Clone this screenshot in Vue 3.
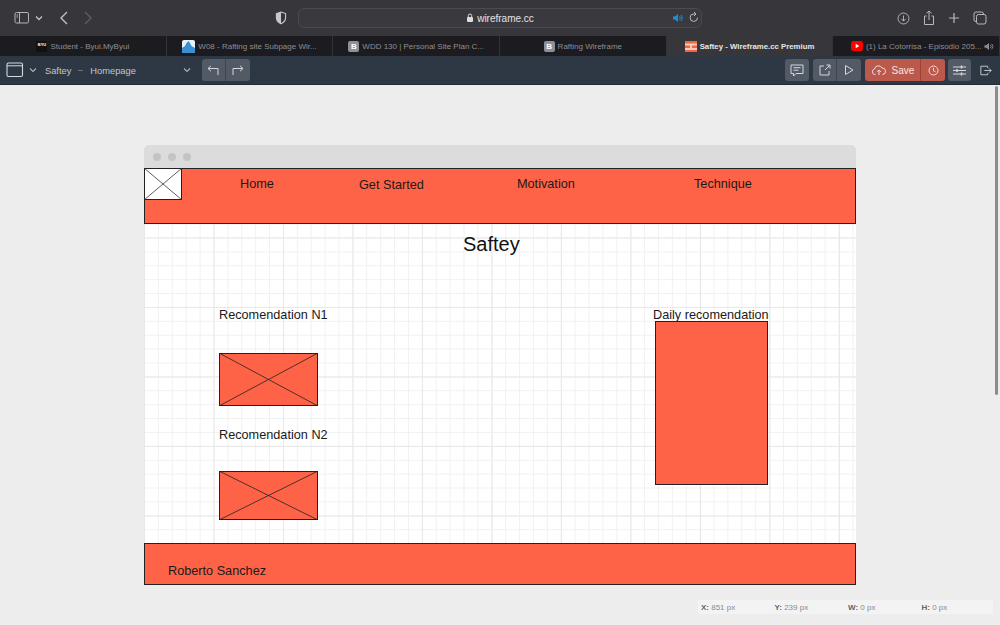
<template>
  <div class="page">
    <header class="toolbar">
      <div class="tb-left">
        <svg class="side-ic" width="16" height="14" viewBox="0 0 16 14"><rect x="1" y="1.500" width="13.500" height="10.500" rx="1.500" fill="none" stroke="#b4b4b6"/><line x1="5.500" y1="1.500" x2="5.500" y2="12" stroke="#b4b4b6"/><path d="M2.500 4h1.500M2.500 6h1.500" stroke="#b4b4b6"/></svg>
        <svg width="8" height="6" viewBox="0 0 8 6"><path d="M1 1.500l3 3 3-3" fill="none" stroke="#c4c4c6" stroke-width="1.300"/></svg>
        <svg class="back" width="10" height="16" viewBox="0 0 10 16"><path d="M8 2L2 8l6 6" fill="none" stroke="#c2c2c4" stroke-width="1.400"/></svg>
        <svg class="forward" width="10" height="16" viewBox="0 0 10 16"><path d="M2 2l6 6-6 6" fill="none" stroke="#5e5e62" stroke-width="1.400"/></svg>
      </div>
      <svg class="shield" width="12" height="14" viewBox="0 0 12 14"><path d="M6 1l4.600 1.600v4c0 3-2 5-4.600 6.200C3.400 11.600 1.400 9.600 1.400 6.600v-4z" fill="none" stroke="#c9c9cb" stroke-width="1.100"/><path d="M6 1v11.800C3.400 11.600 1.400 9.600 1.400 6.600v-4z" fill="#c9c9cb"/></svg>
      <div class="url">
        <span class="url-text">
          <svg width="8" height="10" viewBox="0 0 8 10"><rect x="1" y="4" width="6" height="5" rx="1" fill="#dcdcde"/><path d="M2.300 4V2.700a1.700 1.700 0 0 1 3.400 0V4" fill="none" stroke="#dcdcde"/></svg>
          wireframe.cc
        </span>
        <svg class="speaker" width="10" height="10" viewBox="0 0 10 10"><path d="M0 3.500h2L5 1v8L2 6.500H0z" fill="#1e8fe0"/><path d="M6.500 3.200a2.500 2.500 0 0 1 0 3.600M8 2a4.200 4.200 0 0 1 0 6" fill="none" stroke="#1e8fe0"/></svg>
        <svg class="reload" width="10" height="11" viewBox="0 0 10 11"><path d="M8.500 5.700A3.700 3.700 0 1 1 5 2h1.500" fill="none" stroke="#b9b9bb"/><path d="M5 0l2 2-2 2" fill="none" stroke="#b9b9bb"/></svg>
      </div>
      <div class="tb-right">
        <svg width="13" height="13" viewBox="0 0 14 14"><circle cx="7" cy="7" r="5.900" fill="none" stroke="#b9b9bb"/><path d="M7 3.800v6M4.700 7.500L7 9.800l2.300-2.300" fill="none" stroke="#b9b9bb"/></svg>
        <svg width="12" height="16" viewBox="0 0 12 16"><path d="M3.500 6H1.500v8.500h9V6H8.500" fill="none" stroke="#b9b9bb"/><path d="M6 10V1M3.500 3.300L6 1l2.500 2.300" fill="none" stroke="#b9b9bb"/></svg>
        <svg width="12" height="12" viewBox="0 0 12 12"><path d="M6 1v10M1 6h10" stroke="#b9b9bb" stroke-width="1.200"/></svg>
        <svg width="14" height="14" viewBox="0 0 14 14"><rect x="1" y="1" width="9.500" height="9.500" rx="2" fill="none" stroke="#b9b9bb"/><rect x="3.500" y="3.500" width="9.500" height="9.500" rx="2" fill="#37363b" stroke="#b9b9bb"/></svg>
      </div>
    </header>

    <nav class="tabs">
      <div v-for="tab in tabs" :key="tab.label" class="tab" :class="{ active: tab.active }">
        <span v-if="tab.kind === 'b'" class="fav b">B</span>
        <span v-else-if="tab.kind === 'byu'" class="fav byu">BYU</span>
        <svg v-else-if="tab.kind === 'mtn'" width="13" height="13" viewBox="0 0 13 13"><rect width="13" height="13" rx="2" fill="#e8f1f8"/><path d="M0 13V8l3-2 1.500-3L6.500 1 8 3l1.500 3L13 8v5z" fill="#3c8fd2"/></svg>
        <svg v-else-if="tab.kind === 'wf'" width="12" height="11" viewBox="0 0 12 11"><rect width="12" height="11" fill="#f6c9bb"/><path d="M0 0h12v2.500H0zM0 4.500h5V7H0zM7 4.500h5V7H7zM0 9h12v2H0z" fill="#f0663f"/></svg>
        <svg v-else width="12" height="10" viewBox="0 0 12 10"><rect width="12" height="10" rx="2.500" fill="#f00"/><path d="M4.700 2.800v4.400L8.300 5z" fill="#fff"/></svg>
        <span class="tab-label">{{ tab.label }}</span>
        <svg v-if="tab.sound" class="tab-sound" width="10" height="9" viewBox="0 0 10 10"><path d="M0 3.500h2L5 1v8L2 6.500H0z" fill="#8e8e90"/><path d="M6.500 3.200a2.500 2.500 0 0 1 0 3.600M8 2a4.200 4.200 0 0 1 0 6" fill="none" stroke="#8e8e90"/></svg>
      </div>
    </nav>

    <div class="appbar">
      <svg width="18" height="16" viewBox="0 0 18 16"><rect x="1" y="1" width="15.500" height="13.500" rx="1.500" fill="none" stroke="#d5d8dc" stroke-width="1.100"/><path d="M1 3.800h15.500" stroke="#d5d8dc"/></svg>
      <svg class="chev2" width="8" height="6" viewBox="0 0 8 6"><path d="M1 1.500l3 3 3-3" fill="none" stroke="#a9b0b8" stroke-width="1.100"/></svg>
      <span class="crumb first">Saftey</span>
      <span class="dash"></span>
      <span class="crumb">Homepage</span>
      <svg class="chev3" width="8" height="6" viewBox="0 0 8 6"><path d="M1 1.500l3 3 3-3" fill="none" stroke="#a9b0b8" stroke-width="1.100"/></svg>
      <div class="group">
        <button class="btn">
          <svg width="12" height="11" viewBox="0 0 12 11"><path d="M11 10V3.500H1M4 .8L1 3.500l3 2.700" fill="none" stroke="#d5d8dc"/></svg>
        </button>
        <button class="btn">
          <svg width="12" height="11" viewBox="0 0 12 11"><path d="M1 10V3.500h10M8 .8l3 2.700-3 2.700" fill="none" stroke="#d5d8dc"/></svg>
        </button>
      </div>
      <div class="spacer"></div>
      <button class="btn solo">
        <svg width="14" height="13" viewBox="0 0 14 13"><path d="M1 1h12v8.500H6L3.500 12V9.500H1z" fill="none" stroke="#d5d8dc"/><path d="M3.500 3.700h7M3.500 6.200h5" stroke="#d5d8dc"/></svg>
      </button>
      <div class="group gap-left">
        <button class="btn">
          <svg width="12" height="12" viewBox="0 0 12 12"><path d="M5 2H1v9h9V7M6 6l5-5M7.500 1H11v3.500" fill="none" stroke="#d5d8dc"/></svg>
        </button>
        <button class="btn">
          <svg width="10" height="12" viewBox="0 0 10 12"><path d="M1.500 1.500v9l7.500-4.500z" fill="none" stroke="#d5d8dc"/></svg>
        </button>
      </div>
      <div class="save-group">
        <button class="save">
          <svg width="16" height="12" viewBox="0 0 16 12"><path d="M4.500 10.500H3.800A2.800 2.800 0 0 1 3.500 5 4 4 0 0 1 11 4a3.300 3.300 0 0 1 1 6.500h-.5M8 11V6M6 7.800L8 6l2 1.800" fill="none" stroke="#f4dcd8"/></svg>
          Save
        </button>
        <button class="clock">
          <svg width="11" height="11" viewBox="0 0 11 11"><circle cx="5.500" cy="5.500" r="4.500" fill="none" stroke="#f4dcd8"/><path d="M5.500 2.800v2.900l2 1.200" fill="none" stroke="#f4dcd8"/></svg>
        </button>
      </div>
      <button class="btn solo sliders">
        <svg width="13" height="11" viewBox="0 0 13 11"><path d="M0 2h13M0 5.500h13M0 9h13" stroke="#d5d8dc"/><path d="M8.500.5v3M4 4v3M8.500 7.500v3" stroke="#d5d8dc" stroke-width="1.500"/></svg>
      </button>
      <svg class="exit" width="12" height="11" viewBox="0 0 14 12"><path d="M9 3V1H1v10h8V9M5 6h8M10.500 3.500L13 6l-2.500 2.500" fill="none" stroke="#d5d8dc"/></svg>
    </div>

    <main class="stage">
      <div class="scroll-thumb"></div>
      <div class="window">
        <div class="window-bar">
          <i></i><i></i><i></i>
        </div>
        <div class="canvas">
          <div class="node fill top-bar"></div>
          <svg class="node logo" width="38" height="32" viewBox="0 0 38 32">
            <rect x=".5" y=".5" width="37" height="31" fill="#fff" stroke="#222"/>
            <path d="M0 0L38 32M38 0L0 32" stroke="#333" stroke-width=".8"/>
          </svg>
          <span class="node txt n-home">Home</span>
          <span class="node txt n-start">Get Started</span>
          <span class="node txt n-motivation">Motivation</span>
          <span class="node txt n-technique">Technique</span>
          <span class="node title">Saftey</span>

          <span class="node txt rec-1">Recomendation N1</span>
          <svg class="node img-1" width="99" height="53" viewBox="0 0 99 53">
            <rect x=".5" y=".5" width="98" height="52" fill="#ff6347" stroke="#222"/>
            <path d="M0 0L99 53M99 0L0 53" stroke="#222" stroke-width=".8"/>
          </svg>
          <span class="node txt rec-2">Recomendation N2</span>
          <svg class="node img-2" width="99" height="49" viewBox="0 0 99 49">
            <rect x=".5" y=".5" width="98" height="48" fill="#ff6347" stroke="#222"/>
            <path d="M0 0L99 49M99 0L0 49" stroke="#222" stroke-width=".8"/>
          </svg>

          <span class="node txt daily">Daily recomendation</span>
          <div class="node fill daily-box"></div>

          <div class="node fill bottom-bar"></div>
          <span class="node txt author">Roberto Sanchez</span>
        </div>
      </div>
      <div class="status">
        <span v-for="s in stats" :key="s.k" class="stat"><b>{{ s.k }}:</b> {{ s.v }} px</span>
      </div>
    </main>
  </div>
</template>

<script setup>
const tabs = [
  { label: 'Student - Byui.MyByui', kind: 'byu' },
  { label: 'W08 - Rafting site Subpage Wir...', kind: 'mtn' },
  { label: 'WDD 130 | Personal Site Plan C...', kind: 'b' },
  { label: 'Rafting Wireframe', kind: 'b' },
  { label: 'Saftey - Wireframe.cc Premium', kind: 'wf', active: true },
  { label: '(1) La Cotorrisa - Episodio 205...', kind: 'yt', sound: true }
]

const stats = [
  { k: 'X', v: 851 },
  { k: 'Y', v: 239 },
  { k: 'W', v: 0 },
  { k: 'H', v: 0 }
]
</script>

<style>
html, body { margin: 0; overflow: hidden; }
</style>

<style scoped>
.page {
  width: 1000px;
  height: 625px;
  display: flex;
  flex-direction: column;
  font-family: "Liberation Sans", Arial, sans-serif;
  background: #ededed;
  overflow: hidden;
}

.toolbar {
  height: 36px;
  flex: none;
  background: #37363b;
  display: flex;
  align-items: center;
}
.tb-left {
  display: flex;
  align-items: center;
  padding-left: 14px;
}
.side-ic { margin-right: 5px; }
.back { margin-left: 16px; }
.forward { margin-left: 14px; }
.shield { margin-left: 182px; margin-right: 11px; }
.url {
  width: 404px;
  height: 20px;
  box-sizing: border-box;
  border: 1px solid #4b4a50;
  border-radius: 6px;
  background: #3a393f;
  position: relative;
  display: flex;
  align-items: center;
  justify-content: center;
}
.url-text {
  color: #e4e4e6;
  font-size: 10px;
  display: flex;
  align-items: center;
  gap: 3px;
}
.speaker { position: absolute; right: 18px; top: 4px; }
.reload { position: absolute; right: 2px; top: 3px; }
.tb-right {
  margin-left: auto;
  padding-right: 13px;
  display: flex;
  align-items: center;
  gap: 13px;
}

.tabs {
  height: 20px;
  flex: none;
  display: flex;
  background: #1c1b1f;
}
.tab {
  width: 167px;
  display: flex;
  align-items: center;
  justify-content: center;
  gap: 3px;
  font-size: 8px;
  color: #8f8f92;
  border-right: 1px solid #333237;
  box-sizing: border-box;
  position: relative;
}
.tab.active { background: #37363b; color: #e6e6e8; font-size: 7.800px; font-weight: 700; }
.fav {
  width: 11px;
  height: 11px;
  flex: none;
  border-radius: 2px;
  color: #fff;
  text-align: center;
  font-weight: 700;
  font-size: 8px;
  line-height: 11px;
}
.fav.byu {
  background: #111;
  border-radius: 0;
  font-size: 4px;
  line-height: 8px;
}
.fav.b { background: #8d8f99; }
.tab-sound { position: absolute; right: 5px; top: 6px; }

.appbar {
  height: 29px;
  flex: none;
  box-sizing: border-box;
  background: #2e3744;
  border-bottom: 1px solid #242b35;
  display: flex;
  align-items: center;
  padding-left: 6px;
  color: #c3c7cc;
  font-size: 9.300px;
}
.chev2 { margin-left: 5px; }
.crumb { padding-top: 1px; }
.crumb.first { margin-left: 8px; }
.dash {
  width: 5px;
  height: 1px;
  background: #6a727d;
  margin: 0 7px;
}
.chev3 { margin-left: 47px; }
.group { display: flex; margin-left: 11px; }
.btn {
  width: 24px;
  height: 22px;
  padding: 0;
  border: 0;
  background: #525a65;
  display: flex;
  align-items: center;
  justify-content: center;
  border-right: 1px solid #3f4651;
}
.group .btn:first-child { border-radius: 3px 0 0 3px; }
.group .btn:last-child { border-radius: 0 3px 3px 0; border-right: 0; }
.solo { border-radius: 3px; border-right: 0; }
.spacer { flex: 1; }
.gap-left { margin-left: 4px; }
.save-group { display: flex; margin-left: 4px; }
.save {
  width: 56px;
  height: 22px;
  padding: 0;
  border: 0;
  border-right: 1px solid #9c4438;
  border-radius: 3px 0 0 3px;
  background: #bb5a4c;
  color: #f6e4e0;
  font: 400 10px "Liberation Sans", Arial, sans-serif;
  display: flex;
  align-items: center;
  justify-content: center;
  gap: 5px;
}
.clock {
  width: 24px;
  height: 22px;
  padding: 0;
  border: 0;
  border-radius: 0 3px 3px 0;
  background: #bb5a4c;
  display: flex;
  align-items: center;
  justify-content: center;
}
.sliders { width: 23px; margin-left: 3px; }
.exit { margin: 0 8px 0 9px; }

.stage {
  flex: 1;
  position: relative;
  padding: 60px 0 0 144px;
}
.scroll-thumb {
  position: absolute;
  right: 2px;
  top: 1px;
  width: 3px;
  height: 309px;
  border-radius: 2px;
  background: #8c8c8c;
}
.window { width: 712px; }
.window-bar {
  height: 23px;
  border-radius: 5px 5px 0 0;
  background: #dcdcdc;
  display: flex;
  align-items: center;
  gap: 7px;
  padding-left: 9px;
}
.window-bar i {
  width: 8px;
  height: 8px;
  border-radius: 50%;
  background: #c4c4c4;
}
.canvas {
  position: relative;
  height: 417px;
  background-color: #fff;
  background-image:
    linear-gradient(to right, #e8e8e8 1px, transparent 1px),
    linear-gradient(to bottom, #e8e8e8 1px, transparent 1px),
    linear-gradient(to right, #f1f1f1 1px, transparent 1px),
    linear-gradient(to bottom, #f1f1f1 1px, transparent 1px);
  background-size: 69.500px 69.500px, 69.500px 69.500px, 13.900px 13.900px, 13.900px 13.900px;
}

/* wireframe items sit on a free canvas, so these are absolute */
.node { position: absolute; display: block; }
.fill {
  box-sizing: border-box;
  background: #ff6347;
  border: 1px solid #222;
}
.txt {
  font-size: 12.700px;
  line-height: 15px;
  color: #1a1a1a;
  white-space: nowrap;
}
.title {
  left: 319px;
  top: 64px;
  font-size: 20px;
  line-height: 24px;
  color: #111;
}
.top-bar { left: 0; top: 0; width: 712px; height: 56px; }
.logo { left: 0; top: 0; }
.n-home { left: 96px; top: 9px; }
.n-start { left: 215px; top: 10px; }
.n-motivation { left: 373px; top: 9px; }
.n-technique { left: 550px; top: 9px; }
.rec-1 { left: 75px; top: 140px; }
.img-1 { left: 75px; top: 185px; }
.rec-2 { left: 75px; top: 260px; }
.img-2 { left: 75px; top: 303px; }
.daily { left: 509px; top: 140px; }
.daily-box { left: 511px; top: 153px; width: 113px; height: 164px; }
.bottom-bar { left: 0; top: 375px; width: 712px; height: 42px; }
.author { left: 24px; top: 396px; }

.status {
  margin: 15px 0 0 554px;
  width: 295px;
  height: 14px;
  background: #f3f3f3;
  display: flex;
  align-items: center;
  font-size: 8px;
  color: #8a8a8a;
}
.stat { width: 73.500px; padding-left: 3px; box-sizing: border-box; }
.stat b { color: #666; }
</style>
